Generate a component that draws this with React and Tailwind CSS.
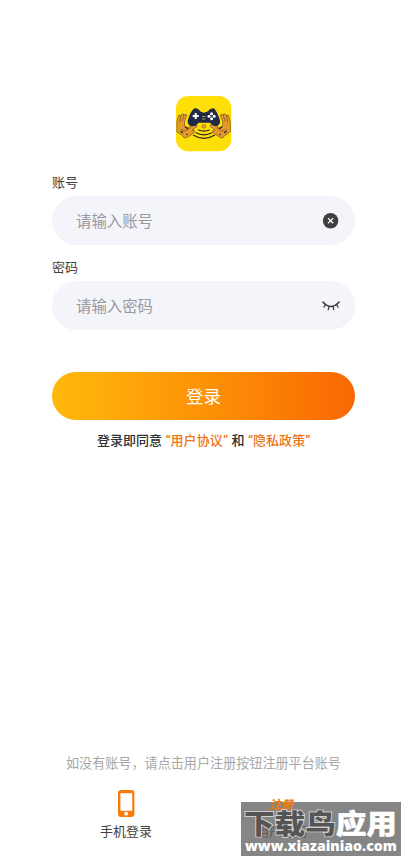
import React from "react";

const FONT = "font-[Roboto,'Noto_Sans_CJK_SC',sans-serif]";

function Hand() {
  return (
    <g stroke="#4a3420" strokeWidth="0.5" strokeLinejoin="round" strokeLinecap="round">
      <path
        fill="#e79a2b"
        d="M1 25 L2.5 19.5 Q3.6 18 4.2 20 L6 18 Q7.5 17 7.7 19 L10 18.3 Q11.4 18.6 10.5 20.5 L8.5 25 L8.5 30 L11 32 L18 28.5 Q21.5 28 21 30.5 L16 34 L18.5 34.5 Q19 37 16.5 38 L10 42 Q7.5 42.6 7 40 L1 36 Z"
      />
      <path fill="none" d="M4.6 20 L3.8 26 M8 19 L6.2 25 M5 33.5 L9 35 L14 32" />
      <path stroke="#25263b" strokeWidth="1.5" d="M9.5 31 L11.5 32.5 M11 38.5 L11.1 38.5 M5 35.5 L6.5 36.5" />
    </g>
  );
}

function Logo() {
  return (
    <svg className="h-14 w-14" viewBox="0 0 56 56" aria-hidden="true">
      <rect x="0" y="0" width="55.2" height="55.2" rx="12" fill="#ffdf08" />
      <Hand />
      <g transform="translate(55.2 0) scale(-1 1)">
        <Hand />
      </g>
      <path
        d="M18.5 12.2 Q22 11.8 24.5 15.5 Q27.8 17.8 31.5 15.5 Q34.5 11.8 38 12.2 Q41.5 16 44 24.5 Q44.5 29.5 39.5 30.3 Q36 30 34 26.8 L22.5 26.8 Q20 30.5 16 30.3 Q11.5 29.5 11.7 24.5 Q14.5 15 18.5 12.2 Z"
        fill="#202945"
      />
      <path d="M19.7 17 V23 M16.7 20 H22.7" stroke="#fff" strokeWidth="2" />
      <g fill="#fff">
        <circle cx="35.6" cy="17.7" r="1.5" />
        <circle cx="35.6" cy="22.7" r="1.5" />
        <circle cx="33" cy="20.2" r="1.5" />
        <circle cx="38.2" cy="20.2" r="1.5" />
      </g>
      <path d="M26 20.5 H29.5 M26 23 H29.5" stroke="#c5b34d" strokeWidth="0.8" />
      <circle cx="27.8" cy="30.3" r="1.9" fill="#f3a51e" stroke="#9b6728" strokeWidth="0.7" />
      <path
        d="M22.5 34 Q28 36.2 33.3 34 M20 36.8 Q28 40.8 36 36.8 M17.5 39.3 Q28 45.3 38.5 39.3"
        fill="none"
        stroke="#30251f"
        strokeWidth="1.2"
        strokeLinecap="round"
      />
    </svg>
  );
}

function ClearIcon() {
  return (
    <svg className="mr-px h-4 w-4" viewBox="0 0 16 16" aria-hidden="true">
      <circle cx="7.6" cy="7.7" r="7.7" fill="#404040" />
      <path d="M5 5.1 L10.2 10.3 M10.2 5.1 L5 10.3" stroke="#fff" strokeWidth="1.3" />
    </svg>
  );
}

function ClosedEyeIcon() {
  return (
    <svg
      className="h-3 w-[18px]"
      viewBox="0 0 18 12"
      fill="none"
      stroke="#3b3b3b"
      strokeWidth="1.5"
      strokeLinecap="round"
      aria-hidden="true"
    >
      <path d="M0.9 2 Q9 11 17.1 2" />
      <path strokeWidth="1.2" d="M3.4 4.6 L1.9 7.2 M7 6.6 L6.2 9.9 M11 6.6 L11.8 9.9 M14.6 4.6 L16.1 7.2" />
    </svg>
  );
}

function Field({ label, placeholder, icon }) {
  return (
    <div>
      <div className="h-[21px] text-[13px] leading-[15px] text-[#404040]">{label}</div>
      <div className="flex h-[49px] items-center justify-between rounded-full bg-[#f4f5fb] pr-[15px] pl-6">
        <span className="pt-[5px] text-[15.4px] text-[#99999d]">{placeholder}</span>
        {icon}
      </div>
    </div>
  );
}

function Watermark() {
  return (
    <div className="absolute top-[802px] left-[241px] h-[54px] w-[160px] bg-[#858585]">
      <div className="absolute top-[23px] left-[15px] text-[13px] leading-none text-[#5c5c5c]">用户注册</div>
      <div className="absolute -top-[3px] left-[28px] text-[12px] leading-none font-black text-[#e87c12] italic">
        注册
      </div>
      <div className="absolute top-[8px] left-[3px] flex origin-top-left scale-y-90 text-[30.6px] leading-[34px] font-black whitespace-nowrap">
        <span className="text-[#555] [-webkit-text-stroke:2px_#cfcfcf] [paint-order:stroke_fill]">下载鸟</span>
        <span className="text-white [-webkit-text-stroke:0.5px_#fff]">应用</span>
      </div>
      <div className="absolute top-[36px] left-[4px] font-['Open_Sans',sans-serif] text-[14.1px] leading-4 font-extrabold whitespace-nowrap text-white">
        www.xiazainiao.com
      </div>
    </div>
  );
}

export default function App() {
  return (
    <main
      lang="zh-CN"
      className={`${FONT} relative flex h-[859px] w-[404px] flex-col overflow-hidden bg-white pt-24`}
    >
      <div className="ml-[176px]">
        <Logo />
      </div>

      <form className="mt-[23px] ml-[52px] flex w-[303px] flex-col">
        <div className="flex flex-col gap-[15px]">
          <Field label="账号" placeholder="请输入账号" icon={<ClearIcon />} />
          <Field label="密码" placeholder="请输入密码" icon={<ClosedEyeIcon />} />
        </div>
        <button
          type="button"
          className="mt-[42px] h-12 rounded-full bg-linear-to-r from-[#ffb90c] to-[#f86703] pt-[3px] text-[17.5px] text-white"
        >
          登录
        </button>
      </form>

      <p className="mt-[13px] ml-[97px] text-[13px] leading-4 font-medium whitespace-nowrap text-[#303030] [word-spacing:0.3px]">
        登录即同意 <span className="text-[#ec7518]">“<span className="tracking-[0.1px]">用户协议</span>”</span> 和{" "}
        <span className="text-[#ec7518]">“<span className="tracking-[0.1px]">隐私政策</span>”</span>
      </p>

      <p className="mt-auto ml-[66px] text-[13.1px] leading-4 whitespace-nowrap text-[#a7a7a7]">
        如没有账号，请点击用户注册按钮注册平台账号
      </p>
      <div className="mt-[18px] mb-[19px] ml-[100px] flex w-[52px] flex-col items-center">
        <svg className="h-[27px] w-[17px]" viewBox="0 0 17 27" aria-hidden="true">
          <rect width="16.4" height="27" rx="3" fill="#fa7a0c" />
          <rect x="2.4" y="3.2" width="11.8" height="17.6" fill="#fff" />
          <circle cx="8.2" cy="23.7" r="1.9" fill="#fff" />
        </svg>
        <span className="mt-[7px] text-[13px] leading-4 whitespace-nowrap text-[#404040]">手机登录</span>
      </div>

      <Watermark />
    </main>
  );
}
